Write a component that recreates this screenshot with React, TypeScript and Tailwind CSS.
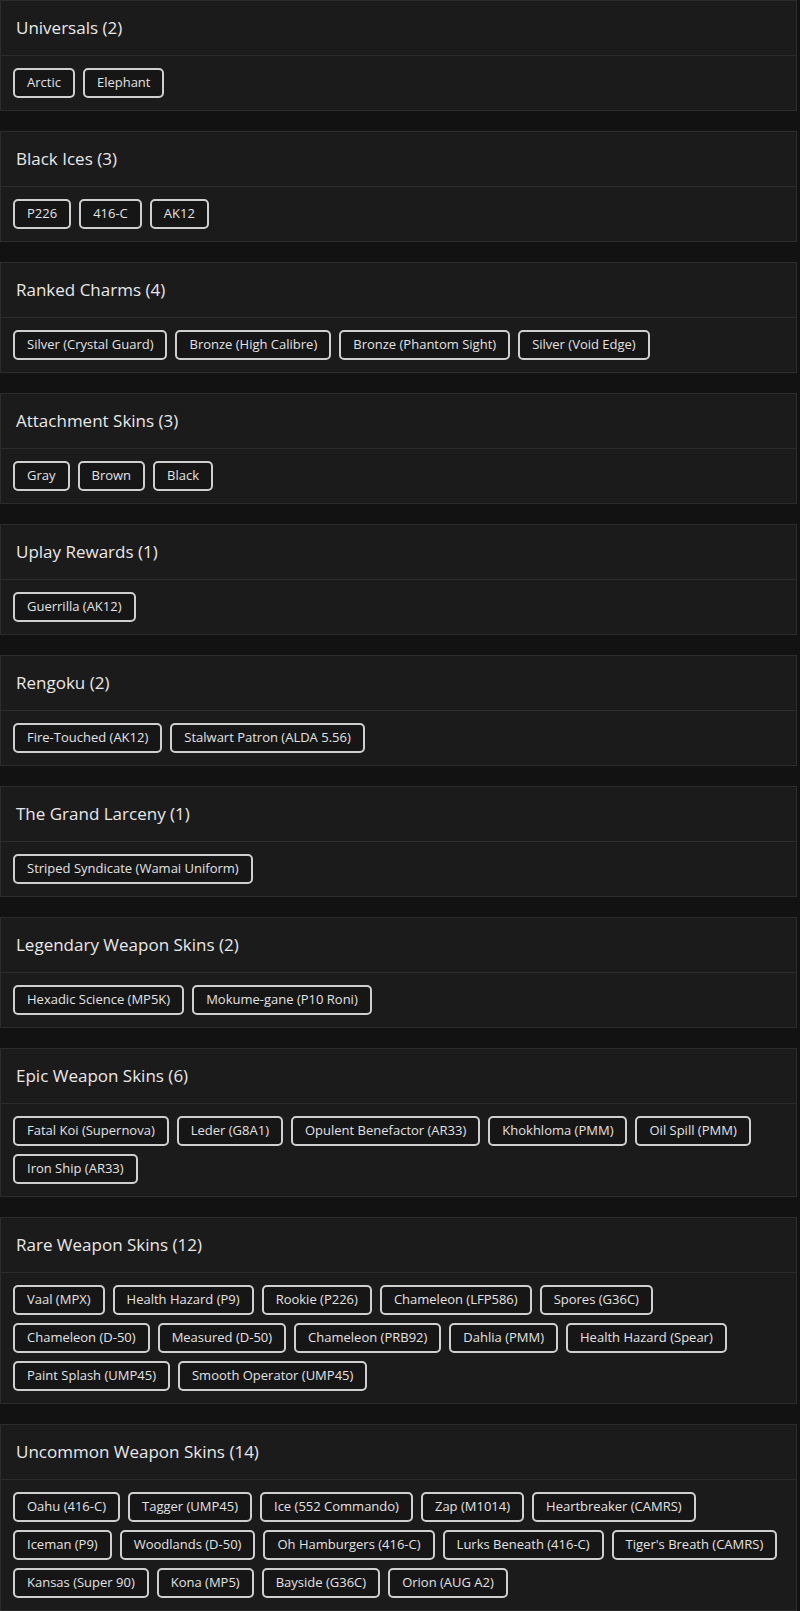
import React from "react";

type Section = { title: string; items: string[] };

const sections: Section[] = [
  { title: "Universals", items: ["Arctic", "Elephant"] },
  { title: "Black Ices", items: ["P226", "416-C", "AK12"] },
  {
    title: "Ranked Charms",
    items: ["Silver (Crystal Guard)", "Bronze (High Calibre)", "Bronze (Phantom Sight)", "Silver (Void Edge)"],
  },
  { title: "Attachment Skins", items: ["Gray", "Brown", "Black"] },
  { title: "Uplay Rewards", items: ["Guerrilla (AK12)"] },
  { title: "Rengoku", items: ["Fire-Touched (AK12)", "Stalwart Patron (ALDA 5.56)"] },
  { title: "The Grand Larceny", items: ["Striped Syndicate (Wamai Uniform)"] },
  { title: "Legendary Weapon Skins", items: ["Hexadic Science (MP5K)", "Mokume-gane (P10 Roni)"] },
  {
    title: "Epic Weapon Skins",
    items: [
      "Fatal Koi (Supernova)",
      "Leder (G8A1)",
      "Opulent Benefactor (AR33)",
      "Khokhloma (PMM)",
      "Oil Spill (PMM)",
      "Iron Ship (AR33)",
    ],
  },
  {
    title: "Rare Weapon Skins",
    items: [
      "Vaal (MPX)",
      "Health Hazard (P9)",
      "Rookie (P226)",
      "Chameleon (LFP586)",
      "Spores (G36C)",
      "Chameleon (D-50)",
      "Measured (D-50)",
      "Chameleon (PRB92)",
      "Dahlia (PMM)",
      "Health Hazard (Spear)",
      "Paint Splash (UMP45)",
      "Smooth Operator (UMP45)",
    ],
  },
  {
    title: "Uncommon Weapon Skins",
    items: [
      "Oahu (416-C)",
      "Tagger (UMP45)",
      "Ice (552 Commando)",
      "Zap (M1014)",
      "Heartbreaker (CAMRS)",
      "Iceman (P9)",
      "Woodlands (D-50)",
      "Oh Hamburgers (416-C)",
      "Lurks Beneath (416-C)",
      "Tiger's Breath (CAMRS)",
      "Kansas (Super 90)",
      "Kona (MP5)",
      "Bayside (G36C)",
      "Orion (AUG A2)",
    ],
  },
];

export default function App() {
  return (
    <div
      className="w-[800px] bg-[#121212] pr-[3px] text-[#e6e6e6]"
      style={{ fontFamily: '"Open Sans", "Noto Sans", sans-serif' }}
    >
      {sections.map((s, i) => (
        <div
          key={s.title}
          className={`border border-[#2c2c2c] bg-[#1b1b1b] ${i === sections.length - 1 ? "" : "mb-[20px]"}`}
        >
          <div className="flex h-[55px] items-center border-b border-[#2c2c2c] pl-[15px] text-[17px] font-medium text-[#e8e8e8]">
            {s.title} ({s.items.length})
          </div>
          <div className="flex flex-wrap p-[8px]">
            {s.items.map((it) => (
              <span
                key={it}
                className="m-[4px] flex h-[30px] items-center rounded-[5px] border-2 border-[#cfcfcf] bg-[#161616] px-[12px] text-[13px] text-[#e2e2e2]"
              >
                {it}
              </span>
            ))}
          </div>
        </div>
      ))}
    </div>
  );
}
